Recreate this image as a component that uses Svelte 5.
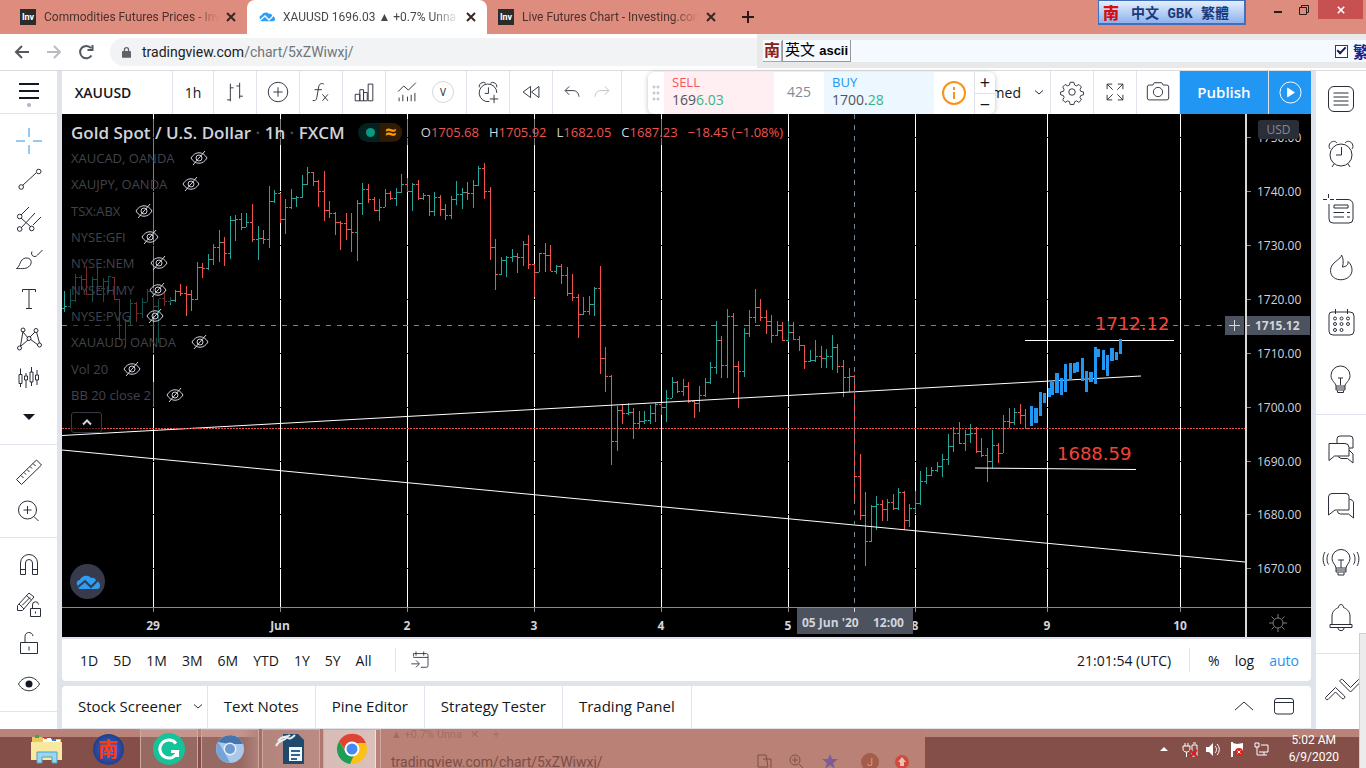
<script lang="ts">
    // [x, high, low, close], the open is the previous close
    const bars = [
        [64, 291, 312, 306], [70, 289, 308, 300], [75, 274, 302, 277], [81, 275, 290, 279], [86, 266, 295, 294], [92, 277, 302, 279],
        [97, 267, 292, 288], [103, 278, 302, 281], [108, 276, 293, 276], [114, 277, 300, 299], [119, 299, 340, 339], [125, 319, 347, 321],
        [130, 299, 325, 303], [136, 302, 322, 313], [142, 298, 318, 302], [147, 289, 302, 291], [153, 288, 316, 306], [158, 299, 343, 298],
        [164, 291, 306, 301], [170, 297, 305, 300], [175, 290, 302, 291], [180, 284, 296, 293], [186, 286, 316, 294], [191, 290, 311, 299],
        [197, 262, 300, 267], [202, 263, 278, 268], [208, 254, 270, 259], [213, 244, 265, 247], [219, 230, 262, 242], [224, 237, 266, 253],
        [230, 216, 259, 220], [235, 215, 241, 219], [241, 213, 230, 227], [246, 213, 227, 222], [252, 204, 242, 239], [258, 226, 260, 238],
        [263, 230, 244, 239], [269, 186, 248, 201], [274, 190, 203, 193], [280, 193, 223, 219], [285, 199, 234, 207], [291, 189, 209, 198],
        [296, 196, 207, 197], [302, 175, 198, 184], [307, 167, 185, 172], [313, 172, 186, 181], [318, 180, 207, 191], [324, 171, 221, 210],
        [329, 201, 218, 213], [335, 212, 235, 222], [340, 221, 250, 223], [346, 213, 240, 229], [351, 213, 252, 232], [357, 200, 261, 203],
        [362, 183, 215, 189], [368, 184, 203, 199], [374, 197, 211, 210], [379, 199, 221, 207], [385, 189, 207, 193], [390, 191, 200, 198],
        [396, 188, 206, 192], [401, 174, 193, 184], [407, 178, 192, 191], [412, 183, 211, 184], [418, 180, 200, 198], [423, 193, 200, 195],
        [429, 195, 216, 211], [434, 192, 216, 197], [440, 195, 216, 209], [445, 204, 220, 215], [451, 196, 219, 199], [456, 181, 205, 194],
        [462, 188, 209, 192], [467, 182, 200, 193], [473, 180, 208, 185], [478, 166, 186, 168], [484, 163, 199, 191], [490, 187, 260, 247],
        [495, 239, 290, 274], [501, 257, 275, 260], [506, 256, 277, 257], [512, 249, 262, 256], [517, 253, 273, 257], [523, 241, 266, 244],
        [528, 235, 269, 264], [534, 264, 297, 272], [539, 253, 272, 253], [545, 243, 272, 255], [550, 245, 271, 271], [556, 265, 274, 266],
        [561, 264, 284, 275], [567, 267, 296, 293], [572, 274, 301, 297], [578, 294, 338, 314], [583, 297, 315, 311], [589, 296, 315, 304],
        [594, 287, 316, 288], [600, 266, 374, 358], [605, 347, 392, 376], [611, 375, 465, 441], [617, 406, 451, 410], [622, 405, 424, 413],
        [628, 403, 415, 412], [633, 408, 439, 423], [639, 411, 428, 421], [644, 411, 424, 420], [650, 405, 424, 413], [655, 403, 422, 404],
        [661, 402, 415, 407], [666, 390, 422, 398], [672, 377, 398, 382], [677, 381, 393, 391], [683, 379, 396, 386], [688, 382, 403, 401],
        [694, 400, 418, 403], [699, 386, 412, 395], [705, 378, 397, 382], [710, 362, 384, 367], [716, 321, 374, 340], [721, 336, 378, 365],
        [727, 309, 378, 316], [733, 313, 393, 366], [738, 361, 408, 371], [744, 328, 377, 333], [749, 310, 337, 317], [755, 289, 323, 307],
        [760, 299, 321, 317], [766, 310, 334, 321], [771, 315, 343, 335], [777, 321, 336, 330], [782, 322, 341, 340], [788, 321, 342, 332],
        [793, 322, 340, 339], [799, 336, 351, 345], [804, 345, 369, 361], [810, 350, 362, 360], [815, 340, 362, 356], [821, 346, 368, 358],
        [826, 349, 368, 356], [832, 335, 370, 347], [837, 344, 373, 366], [843, 360, 397, 377], [849, 368, 392, 376], [854, 375, 502, 476],
        [860, 454, 520, 515], [865, 492, 566, 541], [871, 505, 542, 506], [876, 496, 530, 504], [882, 500, 521, 509], [887, 499, 521, 502],
        [893, 494, 510, 508], [898, 488, 510, 492], [904, 491, 530, 520], [909, 504, 527, 508], [915, 491, 513, 503], [920, 471, 505, 481],
        [926, 467, 484, 475], [931, 467, 476, 470], [937, 462, 472, 466], [942, 454, 477, 459], [948, 434, 465, 446], [953, 427, 452, 433],
        [959, 422, 444, 443], [965, 430, 451, 434], [970, 424, 443, 433], [976, 427, 453, 451], [981, 438, 457, 455], [987, 448, 482, 461],
        [992, 430, 468, 445], [998, 443, 463, 453], [1003, 415, 453, 421], [1009, 408, 428, 422], [1014, 408, 425, 412], [1020, 404, 424, 415],
        [1025, 409, 428, 428],
    ];

    // projected bars: [x, y, width, height]
    const ghosts = [
        [1030, 406, 3, 20], [1034, 408, 4, 15], [1039, 392, 3, 24], [1043, 393, 3, 10], [1048, 388, 3, 9], [1050, 382, 4, 13],
        [1055, 373, 4, 20], [1060, 378, 3, 17], [1064, 364, 3, 28], [1069, 363, 3, 17], [1073, 363, 3, 10], [1076, 362, 3, 10],
        [1081, 358, 3, 23], [1085, 371, 3, 21], [1089, 372, 4, 10], [1094, 347, 3, 37], [1097, 349, 3, 8], [1102, 350, 3, 20],
        [1106, 355, 3, 21], [1110, 348, 4, 13], [1115, 352, 3, 8], [1119, 339, 3, 15],
    ];

    const days: [number, string][] = [
        [153, "29"], [280, "Jun"], [407, "2"], [534, "3"], [661, "4"], [788, "5"], [915, "8"], [1047, "9"], [1180, "10"],
    ];
    const prices = [1750, 1740, 1730, 1720, 1710, 1700, 1690, 1680, 1670];
    const priceY = (p: number) => Math.round(191 + (1740 - p) * 5.39);

    const barPath = (up: boolean) =>
        bars
            .map(([x, high, low, close], i) => {
                const open = i ? bars[i - 1][3] : close + 2;
                if (close <= open !== up) return "";
                return `M${x + 0.5} ${high}V${low}M${x - 2} ${Math.min(Math.max(open, high), low) + 0.5}h2M${x + 1} ${close + 0.5}h2`;
            })
            .join("");

    const studies = [
        "XAUCAD, OANDA", "XAUJPY, OANDA", "TSX:ABX", "NYSE:GFI", "NYSE:NEM",
        "NYSE:HMY", "NYSE:PVG", "XAUAUD, OANDA", "Vol 20", "BB 20 close 2",
    ];
    const ohlc = [["O", "1705.68"], ["H", "1705.92"], ["L", "1682.05"], ["C", "1687.23"], ["", "−18.45 (−1.08%)"]];

    const ranges = ["1D", "5D", "1M", "3M", "6M", "YTD", "1Y", "5Y", "All"];
    const panels = ["Text Notes", "Pine Editor", "Strategy Tester", "Trading Panel"];

    // 28 x 28 line icons
    const icons: Record<string, string> = {
        bars: "M9 5v19M5.5 22.500h3.500M9 9.500h3.500M19 4v17M15.500 7.500h3.500M19 18.500h3.500",
        compare: "M24.500 14a10.500 10.500 0 1 1-21 0a10.500 10.500 0 0 1 21 0M14 9v10M9 14h10",
        fx: "M17 5.500c-3-1.500-5 0-5.500 3L9.500 20c-.5 3-2 4-4.500 3M7 11.500h8M15.500 16.500l6 7M21.500 16.500l-6 7",
        financials: "M4.500 16.500h5v7h-5zM9.500 11.500h4v12h-4zM13.500 14.500h4v9h-4zM18.500 5.500h5v18h-5z",
        templates: "M4.500 13.500l6-6 5 4.500 8-8M5.500 24v-4M9.500 24v-7M14.500 24v-5M18.500 24v-7M22.500 24v-9",
        alert: "M23.500 15a9.500 9.500 0 1 0-8 9.300M14.500 9v6.500h-4M4.500 9a4.500 4.500 0 0 1 7-4.500M16.500 4.500a4.500 4.500 0 0 1 7 4.500M20.500 17v9M16 21.500h9",
        replay: "M13.500 8v12l-8-6zM22.500 8v12l-8-6z",
        undo: "M11 8l-4.500 4.500 4.500 4.500M7 12.500h8c4 0 6 2.500 6.500 6.500",
        redo: "M17 8l4.500 4.500-4.500 4.500M21 12.500h-8c-4 0-6 2.500-6.500 6.500",
        gear: "M12 3.500h4l.8 3 2 .9 2.700-1.500 2.600 2.700-1.500 2.700.8 2 3 .7v3l-3 .8-.8 2 1.500 2.700-2.700 2.700-2.600-1.600-2 .9-.8 3h-4l-.7-3-2-.9-2.700 1.600-2.600-2.700 1.500-2.700-.8-2-3-.8v-3l3-.7.8-2-1.500-2.700 2.600-2.700 2.700 1.500 2-.9zM17.500 14a3.500 3.500 0 1 1-7 0a3.500 3.500 0 0 1 7 0",
        full: "M5.500 11V5.500H11M5.500 5.500l6 6M17 5.500h5.500V11M22.500 5.500l-6 6M5.500 17v5.500H11M5.500 22.500l6-6M22.500 17v5.500H17M22.500 22.500l-6-6",
        camera: "M2.500 8.500a2 2 0 0 1 2-2h4l1.500-2.500h8l1.500 2.500h4a2 2 0 0 1 2 2v12a2 2 0 0 1-2 2h-19a2 2 0 0 1-2-2zM19 14a5 5 0 1 1-10 0a5 5 0 0 1 10 0",
        line: "M7.500 19.500L21 7M8.500 21a2.300 2.300 0 1 1-4.600 0a2.300 2.300 0 0 1 4.600 0M26 5.500a2.300 2.300 0 1 1-4.600 0a2.300 2.300 0 0 1 4.600 0",
        pitchfork: "M6 9l8-8M6 22L20 7M6 12l10 9M18 19l8-8M7 10.500a2.300 2.300 0 1 1-4.600 0a2.300 2.300 0 0 1 4.600 0M7 23a2.300 2.300 0 1 1-4.600 0a2.300 2.300 0 0 1 4.600 0M19 22.500a2.300 2.300 0 1 1-4.600 0a2.300 2.300 0 0 1 4.600 0",
        brush: "M1.500 23.500c4-2 3-9.500 9-10.500c5.500-.5 7 4 4.500 7.500c-3 4-8 3-13.500 3M17 6.500c-2 4 3 7 5.500 3.500l5-5",
        text: "M7.500 7V4.500h13V7M14 5v18.500M11 23.500h6",
        pattern: "M8 7L5.500 22M8 8l5 6M15 13l5-5M21.500 8l3 11M6 22l7-6M15 15l8 6M10 6a2 2 0 1 1-4 0a2 2 0 0 1 4 0M23 6.500a2 2 0 1 1-4 0a2 2 0 0 1 4 0M16 14.500a2 2 0 1 1-4 0a2 2 0 0 1 4 0M6.500 24a2 2 0 1 1-4 0a2 2 0 0 1 4 0M26.500 21a2 2 0 1 1-4 0a2 2 0 0 1 4 0",
        forecast: "M5.500 4.500v6M5.500 20v3M4 10.500h3v9H4zM11 9v3M11 16v8M9.500 12h3v4h-3zM16.500 3v5M16.500 18v4M15 8h3v10h-3zM22 6v5M22 16v5M20.500 11h3v5h-3z",
        ruler: "M1.500 21.500L21.500 2l5 5L6.500 26.500zM6 17.500l2.500 2.500M9 14.500l2 2M12 11.500l2.500 2.500M15 8.500l2 2M18 5.500l2.500 2.500",
        zoom: "M21.500 13a9 9 0 1 1-18 0a9 9 0 0 1 18 0M12.500 9v8M8.500 13h8M19 19.500l4.500 4.500",
        magnet: "M5.500 23.500V12a8.500 8.500 0 0 1 17 0v11.500h-5V12a3.500 3.500 0 0 0-7 0v11.500zM5.500 18.500h5M17.500 18.500h5",
        pencil: "M2.500 19.500v-5L14 2l5 4L7.500 19.500zM11.500 4.500l5 4.500M4 13l5 5M7 14.500l8-8M15.500 17.500h10v8h-10zM17.500 17v-3a3 3 0 0 1 6-.5M20.500 20.500v2",
        lock: "M5.500 12.500h17v11h-17zM10 12V6.500c0-5 7-5.500 8-.5M14 16.500v4",
        eye: "M3.500 14c5-9 16-9 21 0c-5 9-16 9-21 0z",
        list: "M7 1.500h14a5.500 5.500 0 0 1 5.500 5.500v14a5.500 5.500 0 0 1-5.500 5.500H7A5.500 5.500 0 0 1 1.500 21V7A5.500 5.500 0 0 1 7 1.500M6.500 8h15M6.500 12h15M6.500 16h15M6.500 20h15",
        clock: "M25 14a11 11 0 1 1-22 0a11 11 0 0 1 22 0M14.500 6v8H9M3 8C-.5 3 6.500-2.500 10 2M18 2c3.500-4.500 10.500 1 7 6M7 23l-2 3M21 23l2 3",
        news: "M9 2.500h12a5 5 0 0 1 5 5V22a4 4 0 0 1-4 4H6a4 4 0 0 1-4-4V7M1.500-3v4M-4 2.500h4M3 2.500h4M7 8h14v3H7zM6.500 15.500H17M6.500 20H17M20 15.500h3M20 20h3",
        fire: "M14.500 1c.5 4-11 7-11 15.500c0 13 22 12 21.500-1c-.2-3-1.500-6-4-8c.3 3-1 5-5.500 5.500c1-4 1-9-1-12z",
        calendar: "M5 2h18a4 4 0 0 1 4 4v15a4 4 0 0 1-4 4H6a4 4 0 0 1-4-4V5a3 3 0 0 1 3-3M8.500-1v5M20.500-1v5M9.500 8.500a1.500 1.500 0 1 1-3 0a1.500 1.500 0 0 1 3 0M16 8.500a1.500 1.500 0 1 1-3 0a1.500 1.500 0 0 1 3 0M22.500 8.500a1.500 1.500 0 1 1-3 0a1.500 1.500 0 0 1 3 0M9.500 14a1.500 1.500 0 1 1-3 0a1.500 1.500 0 0 1 3 0M16 14a1.500 1.500 0 1 1-3 0a1.500 1.500 0 0 1 3 0M22.500 14a1.500 1.500 0 1 1-3 0a1.500 1.500 0 0 1 3 0M9.500 20a1.500 1.500 0 1 1-3 0a1.500 1.500 0 0 1 3 0M16 20a1.500 1.500 0 1 1-3 0a1.500 1.500 0 0 1 3 0",
        bulb: "M9 20c0-3-5-5-5-10.500a9.500 9.500 0 0 1 19 0C23 15 18 17 18 20zM11 12h5M13.500 12v7M9 20v4h9v-4M9 22h9M10.500 24.500v2h6v-2",
        chats: "M2 7.500h16a4 4 0 0 1 4 4V20H7.500L2 24.500zM10 7V3a3 3 0 0 1 3-3h10a3 3 0 0 1 3 3v9h-4M22 14l4 4v9l-5.500-4.500H14l-3-2",
        chat: "M5 1.500h14a3 3 0 0 1 3 3V18H8l-6.500 5V5A3.500 3.500 0 0 1 5 1.500M22.500 7.500a3.500 3.500 0 0 1 4 3.500v15l-5-4h-8a3 3 0 0 1-3-3",
        stream: "M9 20c0-3-4-5-4-9.500a9 9 0 0 1 18 0c0 4.500-4 6.500-4 9.500zM11 12h6M14 12v8M9 20v4h10v-4M9 22h10M11 24.500V27h6v-2.500M1.500 5.500c-2 3-2 8 0 11M-2 4c-2.500 4-2.500 10 0 14M26.500 5.500c2 3 2 8 0 11M30 4c2.500 4 2.500 10 0 14",
        bell: "M3 20.500h22v3H3zM5 20.500V12c0-5 4-7.500 6.500-8.500c0-4 5-4 5 0C19 4.500 23 7 23 12v8.500M11 24c0 3.500 6 3.500 6 0",
        depth: "M-1.500 20.500L8.500 10.500l9 8.500a1.800 1.800 0 0 1-2.500 2.500l-6.500-6.500-7.500 7.500a1.800 1.800 0 0 1-2.500-2zM13 4.500a1.800 1.800 0 0 1 2.500-2l8 8 8-8a1.800 1.800 0 0 1 2.500 2L23.500 15z",
        goto: "M7.500 10V6.500h15a2 2 0 0 1 2 2v12a2 2 0 0 1-2 2H16M10.500 4v5M19.500 4v5M7.500 11h17M5 18.500h9M10.500 14.500l4 4-4 4",
    };

    const tools = ["cross", "line", "pitchfork", "brush", "text", "pattern", "forecast", "more"];
    const tools2 = ["ruler", "zoom"];
    const tools3 = ["magnet", "pencil", "lock", "eye"];
    const widgets = ["list", "clock", "news", "fire", "calendar", "bulb"];
    const widgets2 = ["chats", "chat", "stream", "bell"];
</script>

{#snippet icon(name: string)}
    <svg class="icon" viewBox="0 0 28 28" aria-hidden="true">
        {#if name === "cross"}
            <path class="blue" d="M14 1v9M14 18v9M1 14h9M18 14h9" />
        {:else if name === "more"}
            <path class="solid" d="M8 11h12l-6 6z" />
        {:else}
            <path d={icons[name]} />
            {#if name === "eye"}<circle class="solid" cx="14" cy="14" r="3.500" />{/if}
        {/if}
    </svg>
{/snippet}

{#snippet tool(name: string)}
    <button class="tool" aria-label={name}>{@render icon(name)}</button>
{/snippet}

{#snippet cloud()}
    <svg class="cloud" viewBox="0 0 24 14" aria-hidden="true">
        <path fill="#2e9df4" d="M1 9.500C0 7 2 5 4 5c1-4 8-6 11-2c3-1 5 1 5 3c3 0 4 3 4 5c0 2-1 3-3 3H3z" />
        <path class="zig" d="M2 12l7-6 6 6 6-6" />
    </svg>
{/snippet}

{#snippet closeMark()}
    <button class="close" aria-label="close tab">
        <svg viewBox="0 0 8 8"><path d="M0 0l8 8M8 0L0 8" /></svg>
    </button>
{/snippet}

<div class="page">
    <header class="tabs">
        <div class="tab">
            <span class="inv">Inv</span>
            <span class="tab-title">Commodities Futures Prices - Inv</span>
            {@render closeMark()}
        </div>
        <div class="tab active">
            {@render cloud()}
            <span class="tab-title">XAUUSD 1696.03 ▲ +0.7% Unna</span>
            {@render closeMark()}
        </div>
        <div class="tab">
            <span class="inv">Inv</span>
            <span class="tab-title">Live Futures Chart - Investing.com</span>
            {@render closeMark()}
        </div>
        <button class="new-tab" aria-label="new tab"><svg viewBox="0 0 12 12"><path d="M6 0v12M0 6h12" /></svg></button>
        <div class="ime-badge"><b>南</b><span>中文 GBK 繁體</span></div>
        <div class="window-controls">
            <button aria-label="minimise"><svg viewBox="0 0 10 10"><path stroke-width="2" d="M1 7h8" /></svg></button>
            <button aria-label="restore"><svg viewBox="0 0 10 10"><path d="M.5 2.500h7v7h-7zM2.500 2.500v-2h7v7h-2" /></svg></button>
            <button class="quit" aria-label="close window"><svg viewBox="0 0 10 10"><path d="M1 1l8 8M9 1L1 9" /></svg></button>
        </div>
    </header>

    <div class="address">
        <button aria-label="back"><svg viewBox="0 0 16 16"><path d="M15 8H2M8 2L2 8l6 6" /></svg></button>
        <button class="off" aria-label="forward"><svg viewBox="0 0 16 16"><path d="M1 8h13M8 2l6 6-6 6" /></svg></button>
        <button aria-label="reload"><svg viewBox="0 0 16 16"><path d="M13.500 11.500A6.200 6.200 0 1 1 13 4M14.500 1v5h-5" /></svg></button>
        <div class="url">
            <svg viewBox="0 0 10 12"><path fill="#5f6368" d="M1 4.500h1V3a3 3 0 0 1 6 0v1.500h1a1 1 0 0 1 1 1V11a1 1 0 0 1-1 1H1a1 1 0 0 1-1-1V5.500a1 1 0 0 1 1-1M3.500 4.500h3V3a1.500 1.500 0 0 0-3 0z" /></svg>
            <span>tradingview.com<i>/chart/5xZWiwxj/</i></span>
        </div>
        <div class="ime-bar">
            <b class="nan">南</b>
            <span class="mode">英文 <b>ascii</b></span>
            <input type="checkbox" checked aria-label="繁" />
            <b class="fan">繁</b>
        </div>
    </div>

    <main>
        <nav class="left">
            <button class="menu" aria-label="menu">
                <svg viewBox="0 0 20 26"><path d="M0 5h20M0 12h20M0 19h20" /><circle cx="10" cy="26" r="2" /></svg>
            </button>
            <div class="group drawing">
                {#each tools as name}{@render tool(name)}{/each}
            </div>
            <div class="group measuring">
                {#each tools2 as name}{@render tool(name)}{/each}
            </div>
            <div class="group locking">
                {#each tools3 as name}{@render tool(name)}{/each}
            </div>
        </nav>

        <section class="center">
            <div class="topbar">
                <button class="symbol">XAUUSD</button>
                <button class="interval">1h</button>
                <button class="cell" aria-label="bars">{@render icon("bars")}</button>
                <button class="cell" aria-label="compare">{@render icon("compare")}</button>
                <button class="cell" aria-label="indicators">{@render icon("fx")}</button>
                <button class="cell" aria-label="financials">{@render icon("financials")}</button>
                <div class="cell templates">{@render icon("templates")}<button class="v">V</button></div>
                <button class="cell" aria-label="alert">{@render icon("alert")}</button>
                <button class="cell" aria-label="replay">{@render icon("replay")}</button>
                <div class="cell history">{@render icon("undo")}<span class="faded">{@render icon("redo")}</span></div>
                <button class="layout">Unnamed <svg viewBox="0 0 8 5"><path d="M0 .5l4 3.500 4-3.500" /></svg></button>
                <button class="cell" aria-label="settings">{@render icon("gear")}</button>
                <button class="cell" aria-label="fullscreen">{@render icon("full")}</button>
                <button class="cell" aria-label="snapshot">{@render icon("camera")}</button>
                <button class="publish">Publish</button>
                <button class="play" aria-label="play">
                    <svg viewBox="0 0 24 24"><circle cx="12" cy="12" r="11" /><path d="M9 7.500l7 4.500-7 4.500z" /></svg>
                </button>
                <div class="quotes">
                    <span class="grip"></span>
                    <button class="sell"><b>SELL</b><span>169<em>6.03</em></span></button>
                    <span class="spread">425</span>
                    <button class="buy"><b>BUY</b><span>1700.<em>28</em></span></button>
                    <button class="info" aria-label="info">
                        <svg viewBox="0 0 24 24"><circle cx="12" cy="12" r="11" /><path d="M12 6v3M12 11v7" /></svg>
                    </button>
                    <div class="steps"><button>+</button><button>−</button></div>
                </div>
            </div>

            <div class="chart">
                <svg class="plot" viewBox="62 114 1249 523" preserveAspectRatio="xMinYMin slice">
                    {#each days as [x]}
                        <path class="day" d="M{x + 0.5} 114V607" />
                        <path class="tick" d="M{x + 0.5} 607v5" />
                    {/each}
                    {#each prices as p}
                        <path class="level" d="M62 {priceY(p) + 0.5}H1245" />
                    {/each}
                    <path class="up" d={barPath(true)} />
                    <path class="down" d={barPath(false)} />
                    <path class="trend" d="M62 435.500L1141 376M62 450L1245 562M975 468L1136 469.500M1025 340.500H1174" />
                    {#each ghosts as [x, y, w, h]}
                        <rect {x} {y} width={w} height={h} fill="#2196f3" />
                    {/each}
                    <path class="last" d="M62 428.500H1245" />
                    <path class="cross" d="M62 325.500H1245M854.500 114V607" />
                    <text class="note" x="1095" y="330">1712.12</text>
                    <text class="note" x="1057" y="460">1688.59</text>

                    <path class="tick" d="M62 607.500H1311" />
                    <path class="axis" d="M1246 114V637" />
                    {#each days as [x, label]}
                        <text class="label" {x} y="630" text-anchor="middle">{label}</text>
                    {/each}
                    {#each prices as p}
                        <path class="tick" d="M1247 {priceY(p) + 0.5}h4" />
                        <text class="price" x="1257" y={priceY(p) + 5}>{p}.00</text>
                    {/each}

                    <rect x="1225" y="316" width="19" height="19" fill="#4c525e" />
                    <path class="axis thin" d="M1229 325.500h11M1234.500 320v11" />
                    <rect x="1247" y="316" width="63" height="19" fill="#4c525e" />
                    <path class="axis thin" d="M1247 325.500h3" />
                    <text class="label" x="1255" y="330">1715.12</text>
                    <rect x="797" y="608" width="116" height="26" fill="#4c525e" />
                    <path class="axis thin" d="M854.500 608v4" />
                    <text class="label" x="802" y="627">05 Jun '20</text>
                    <text class="label" x="873" y="627">12:00</text>
                    <circle class="sun" cx="1278" cy="623" r="5" />
                    <path class="sun" d="M1278 618v-4M1278 628v4M1273 623h-4M1283 623h4M1274.500 619.500l-3-3M1281.500 619.500l3-3M1274.500 626.500l-3 3M1281.500 626.500l3 3" />
                </svg>

                <div class="legend">
                    <div class="title">
                        <h1>Gold Spot / U.S. Dollar <i>·</i> 1h <i>·</i> FXCM</h1>
                        <span class="status"><span class="dot"></span><span class="delay">≈</span></span>
                        <span class="ohlc">
                            {#each ohlc as [key, value]}<span>{key}<b>{value}</b></span>{/each}
                        </span>
                    </div>
                    <ul>
                        {#each studies as study}
                            <li>
                                <span>{study}</span>
                                <svg viewBox="0 0 18 14"><path d="M1 7c4-7 12-7 16 0c-4 7-12 7-16 0zM12 7a3 3 0 1 1-6 0a3 3 0 0 1 6 0M3 14L15 0" /></svg>
                            </li>
                        {/each}
                    </ul>
                    <button class="collapse" aria-label="collapse"><svg viewBox="0 0 8 5"><path d="M0 4.500l4-4 4 4" /></svg></button>
                </div>
                <a class="brand" href="#top" aria-label="TradingView">{@render cloud()}</a>
                <button class="currency">USD</button>
            </div>

            <div class="ranges">
                {#each ranges as range}<button>{range}</button>{/each}
                <button class="goto" aria-label="go to date">{@render icon("goto")}</button>
                <span class="time">21:01:54 (UTC)</span>
                <button class="percent">%</button>
                <button>log</button>
                <button class="auto">auto</button>
            </div>

            <div class="panels">
                <button class="screener">Stock Screener <svg viewBox="0 0 8 5"><path d="M0 .5l4 3.500 4-3.500" /></svg></button>
                {#each panels as panel}<button>{panel}</button>{/each}
                <div class="panel-tools">
                    <svg viewBox="0 0 20 20"><path d="M1 14l9-8 9 8" /></svg>
                    <svg viewBox="0 0 20 20"><path d="M3 2.500h14a2.500 2.500 0 0 1 2.500 2.500v10.500a2.500 2.500 0 0 1-2.500 2.500H3a2.500 2.500 0 0 1-2.500-2.500V5A2.500 2.500 0 0 1 3 2.500M1 6.500h18" /></svg>
                </div>
            </div>
        </section>

        <nav class="right">
            <div class="group upper">
                {#each widgets as name}{@render tool(name)}{/each}
            </div>
            <div class="group lower">
                {#each widgets2 as name}{@render tool(name)}{/each}
            </div>
            <div class="group last-group">{@render tool("depth")}</div>
        </nav>
    </main>

    <footer>
        <div class="apps">
            <button class="app" aria-label="files">
                <svg viewBox="0 0 32 32">
                    <path fill="#e8c75c" d="M1 4h10l2 2h17v21H1z" />
                    <path fill="#fff" d="M12 5h8v4h-8zM20 7h9v4h-9z" />
                    <path fill="#39a845" d="M4 2h4v3H4z" /><path fill="#d9402c" d="M13 4h3v2h-3z" /><path fill="#2c7fd9" d="M21 6h4v2h-4z" />
                    <path fill="#f9e9a0" d="M0 9h31v18H0z" />
                    <path fill="#9ad6ee" stroke="#4f9fc4" d="M6 19h20v11h-5v-6H11v6H6z" />
                </svg>
            </button>
            <button class="app nanji" aria-label="nanji"><b>南</b></button>
            <button class="app open" aria-label="grammarly">
                <svg viewBox="0 0 32 32"><circle cx="16" cy="16" r="16" fill="#15c39a" /><path fill="none" stroke="#fff" stroke-width="3" d="M23 10.500a9 9 0 1 0 1.500 8h-6.500M24.500 17v7" /></svg>
            </button>
            <button class="app open" aria-label="chromium">
                <svg viewBox="0 0 32 32"><circle cx="16" cy="16" r="14" fill="#a9c8ea" /><path fill="#4674ac" d="M4 9a14 14 0 0 1 25 2H16z" /><path fill="#76a3d6" d="M4 9l7 11 5 10A14 14 0 0 1 4 9" /><circle cx="16" cy="16" r="6.500" fill="#e4f0fb" /><circle cx="16" cy="16" r="5" fill="#6d9ad0" /></svg>
            </button>
            <button class="app open" aria-label="writer">
                <svg viewBox="0 0 32 32"><path fill="#1f4a6e" d="M8 1h15l6 6v24H8z" /><path fill="#f4f8fb" d="M14 14h13v14H14z" /><path stroke="#2b6796" stroke-width="2" d="M16 18h9M16 22h9M16 26h6" /><path fill="none" stroke="#e5eef5" stroke-width="2" d="M1 13c3-7 8-4 11-9c2 3 5 1 8-2M3 8c4-6 8-3 12-6" /></svg>
            </button>
            <button class="app open current" aria-label="chrome">
                <svg viewBox="0 0 32 32"><circle cx="16" cy="16" r="15" fill="#fbc116" /><path fill="#dd4434" d="M3 8.500a15 15 0 0 1 27 1.500H16l-6 8z" /><path fill="#1c9e58" d="M3 8.500L10 19l8 3-4 9A15 15 0 0 1 3 8.500" /><circle cx="16" cy="16" r="7.500" fill="#fff" /><circle cx="16" cy="16" r="5.500" fill="#4688f4" /></svg>
            </button>
            <div class="glass" aria-hidden="true">
                <span class="glass-title">▲ +0.7% Unna &nbsp; ✕ &nbsp; &nbsp; +</span>
                <div class="glass-row">
                    <span>tradingview.com/chart/5xZWiwxj/</span>
                    <svg viewBox="0 0 160 16">
                        <path d="M7 1h8l2 12H7zM12 5h8v10h-6" />
                        <path d="M49 6a5 5 0 1 1-10 0a5 5 0 0 1 10 0M48 10l5 5M44 3v6M41 6h6" />
                        <path fill="#7a5c99" stroke="none" d="M79 0l2 5h6l-5 4 2 6-5-4-5 4 2-6-5-4h6z" />
                        <circle cx="119" cy="8" r="9" fill="#a35d49" stroke="none" />
                        <text x="119" y="12" text-anchor="middle">J</text>
                        <circle cx="151" cy="8" r="7" fill="#cf4a3c" stroke="none" /><path fill="#e8c0b8" stroke="none" d="M151 3l4 5h-2v4h-4V8h-2z" />
                    </svg>
                </div>
            </div>
        </div>
        <div class="tray">
            <svg viewBox="0 0 112 18">
                <path fill="#fff" d="M3 11l4-4 4 4z" />
                <path class="tray-line" d="M28 3v3M31 3v3M26 6h7v3c0 4-7 4-7 0zM29.500 12v5M35 5h5v11h-5zM36 3h3" />
                <path stroke="#e01b1b" stroke-width="2" d="M33 10l7 7M40 10l-7 7" />
                <path fill="#fff" d="M49 7h3l4-4v13l-4-4h-3z" /><path class="tray-line" d="M58 6c2 2 2 5 0 7M60 4c3 3 3 8 0 11" />
                <path fill="#fff" d="M74 2h2v15h-2zM76 3l4 1 6-1v8h-10z" />
                <circle cx="82" cy="12" r="4" fill="#d9251c" /><path class="tray-line" d="M80.500 10.500l3 3M83.500 10.500l-3 3" />
                <path class="tray-line" d="M98 3h4v4h-4zM100 7v8h4M104 5h7v7h-9M104 15h6M107 12v3" />
            </svg>
            <div class="date"><span>5:02 AM</span><span>6/9/2020</span></div>
        </div>
    </footer>
    <div class="edge"></div>
</div>

<style>
    :global(body) {
        background: #e0e3eb;
    }

    .page {
        position: relative;
        display: flex;
        flex-direction: column;
        min-height: 100vh;
        overflow: hidden;
        font-family: "Open Sans", "Noto Sans", "Noto Sans CJK SC", sans-serif;
        font-size: 13px;
        color: #131722;
    }

    button {
        display: flex;
        align-items: center;
        justify-content: center;
        padding: 0;
        border: 0;
        background: none;
        font: inherit;
        color: inherit;
        white-space: nowrap;
        cursor: pointer;
    }

    svg {
        display: block;
        flex: none;
        overflow: visible;
    }

    /* browser tabs */
    .tabs {
        position: relative;
        display: flex;
        height: 34px;
        background: #de8c7d;
        font-family: Roboto, sans-serif;
        font-size: 12px;
    }
    .tab {
        display: flex;
        align-items: center;
        gap: 8px;
        box-sizing: border-box;
        width: 240px;
        padding: 0 12px 0 20px;
        color: #4b302b;
    }
    .tab:first-child {
        width: 247px;
    }
    .tab.active {
        padding-left: 12px;
        background: #fff;
        border-radius: 8px 8px 0 0;
        color: #45494d;
    }
    .tab:nth-child(3) {
        padding: 0 12px 0 11px;
    }
    .tab-title {
        flex: 1;
        overflow: hidden;
        white-space: nowrap;
        mask-image: linear-gradient(to right, #000 85%, transparent);
    }
    .inv {
        width: 16px;
        line-height: 16px;
        background: #2b2b2b;
        color: #fff;
        font-size: 9px;
        font-weight: 700;
        text-align: center;
    }
    .cloud {
        width: 16px;
    }
    .zig {
        fill: none;
        stroke: #fff;
        stroke-width: 2;
    }
    .close svg {
        width: 8px;
        fill: none;
        stroke: #3a2724;
        stroke-width: 2;
    }
    .new-tab {
        width: 42px;
    }
    .new-tab svg {
        width: 12px;
        stroke: #2a1b18;
        stroke-width: 2;
    }
    .ime-badge {
        position: absolute;
        top: 0;
        right: 120px;
        display: flex;
        align-items: center;
        gap: 12px;
        box-sizing: border-box;
        width: 148px;
        height: 25px;
        padding: 0 4px;
        border: 1px solid #3f6fc0;
        border-width: 1px 2px 2px 1px;
        background: linear-gradient(#e4effd, #8eb2ec);
        color: #1a3a7c;
        font: 700 16px "Liberation Mono", "Noto Sans CJK SC", monospace;
        white-space: nowrap;
    }
    .ime-badge span {
        font-size: 14px;
    }
    .ime-badge b {
        color: #d41111;
    }
    .window-controls {
        display: flex;
        margin-left: auto;
        padding-right: 3px;
        height: 19px;
    }
    .window-controls button {
        width: 26px;
    }
    .window-controls svg {
        width: 10px;
        fill: none;
        stroke: #2a1b18;
    }
    .window-controls .quit {
        width: 45px;
        margin-left: 1px;
        background: #c75050;
    }
    .window-controls .quit svg {
        width: 8px;
        stroke: #fff;
        stroke-width: 2;
    }

    /* address row */
    .address {
        position: relative;
        display: flex;
        align-items: center;
        gap: 16px;
        box-sizing: border-box;
        height: 37px;
        padding-left: 14px;
        background: #fff;
        border-bottom: 1px solid #dadce0;
    }
    .address button svg {
        width: 16px;
        fill: none;
        stroke: #54585c;
        stroke-width: 2;
    }
    .address .off svg {
        stroke: #b9bcc0;
    }
    .url {
        display: flex;
        flex: 1;
        align-items: center;
        gap: 11px;
        height: 28px;
        padding-left: 12px;
        border-radius: 14px 0 0 14px;
        background: #f1f3f4;
        color: #202124;
        font-family: Roboto, sans-serif;
        font-size: 14px;
    }
    .url svg {
        width: 9px;
    }
    .url i {
        color: #70757a;
        font-style: normal;
    }
    .ime-bar {
        position: absolute;
        top: 0;
        right: 0;
        display: flex;
        align-items: center;
        box-sizing: border-box;
        width: 609px;
        height: 34px;
        border: 6px solid #e9e9e9;
        border-right: 0;
        background: #f4faff;
        font: 15px "Liberation Sans", "Noto Sans CJK SC", sans-serif;
        color: #000;
        overflow: hidden;
    }
    .nan {
        width: 18px;
        border: 1px solid #aaa;
        border-width: 0 1px 1px 0;
        font-size: 16px;
        line-height: 20px;
        text-align: center;
        color: #8c2020;
    }
    .mode {
        padding: 0 2px;
        border: 1px solid #999;
        border-width: 0 1px 1px 1px;
        line-height: 20px;
    }
    .mode b {
        font-size: 13px;
    }
    .ime-bar input {
        display: flex;
        align-items: center;
        justify-content: center;
        width: 13px;
        height: 13px;
        margin: 0 5px 0 auto;
        border: 1px solid #2a2ea8;
        background: #fff;
        appearance: none;
    }
    .ime-bar input::before {
        width: 7px;
        height: 3px;
        margin-bottom: 3px;
        border: solid #16165c;
        border-width: 0 0 2px 2px;
        transform: rotate(-45deg);
        content: "";
    }
    .fan {
        width: 13px;
        font-size: 16px;
        color: #201c8c;
    }

    main {
        display: flex;
        flex: 1;
        gap: 5px;
        min-height: 0;
        background: #e0e3eb;
    }

    /* side toolbars */
    .left,
    .right {
        display: flex;
        flex: none;
        flex-direction: column;
        width: 57px;
        background: #fff;
    }
    .right {
        width: 50px;
    }
    .menu {
        height: 43px;
        border-bottom: 1px solid #e0e3eb;
    }
    .menu svg {
        width: 20px;
        fill: #b2b5be;
        stroke: #131722;
        stroke-width: 2;
    }
    .menu circle {
        stroke: none;
    }
    .group {
        display: flex;
        flex-direction: column;
        box-sizing: border-box;
        border-bottom: 1px solid #e0e3eb;
        padding: 7px 0;
    }
    .tool {
        flex: 1;
    }
    .drawing {
        height: 331px;
    }
    .measuring {
        height: 93px;
    }
    .locking {
        height: 174px;
    }
    .upper {
        height: 344px;
        padding: 0 0 6px;
    }
    .lower {
        height: 239px;
    }
    .last-group {
        height: 73px;
        border: 0;
    }
    .icon {
        width: 28px;
        height: 28px;
        fill: none;
        stroke: #2a2e39;
    }
    .icon .blue {
        stroke: #2196f3;
    }
    .icon .solid {
        fill: #131722;
        stroke: none;
    }

    .center {
        display: flex;
        flex: 1;
        flex-direction: column;
        min-width: 0;
    }

    /* chart header */
    .topbar {
        position: relative;
        display: flex;
        height: 43px;
        background: #fff;
        font-size: 14px;
    }
    .topbar > button,
    .topbar > .cell {
        box-sizing: border-box;
        padding-bottom: 1px;
        border-right: 1px solid #e0e3eb;
    }
    .topbar .icon {
        width: 26px;
        height: 26px;
    }
    .topbar .symbol {
        width: 111px;
        padding-right: 28px;
        font-weight: 600;
    }
    .interval {
        width: 41px;
    }
    .cell {
        display: flex;
        align-items: center;
        justify-content: center;
        width: 43px;
    }
    .templates {
        gap: 12px;
        width: 81px;
        padding-right: 4px;
    }
    .v {
        width: 22px;
        height: 22px;
        border: 1px solid #d5d8e0;
        border-radius: 50%;
        font-size: 10px;
    }
    .history {
        gap: 4px;
        width: 69px;
        margin-right: auto;
    }
    .faded {
        opacity: 0.3;
    }
    .topbar .layout {
        gap: 14px;
        padding: 0 7px 1px 8px;
    }
    .layout svg,
    .screener svg {
        width: 8px;
        fill: none;
        stroke: #2a2e39;
    }
    .topbar .publish {
        width: 89px;
        background: #2196f3;
        color: #fff;
        font-size: 15px;
        font-weight: 600;
    }
    .topbar .play {
        width: 42px;
        border: 0;
        background: #2196f3;
    }
    .play svg {
        width: 23px;
        fill: #fff;
        stroke: #fff;
    }
    .play circle {
        fill: none;
    }
    .quotes {
        position: absolute;
        top: 1px;
        right: 316px;
        z-index: 2;
        display: flex;
        width: 347px;
        height: 42px;
        border-radius: 6px;
        background: #fff;
        box-shadow: 0 1px 5px rgba(0, 0, 0, 0.25);
        overflow: hidden;
    }
    .grip {
        width: 8px;
        height: 18px;
        margin: 12px 4px;
        background: radial-gradient(circle, #c9ccd4 1px, transparent 2px) 0 0 / 4px 6px;
    }
    .sell,
    .buy {
        flex-direction: column;
        align-items: flex-start;
        box-sizing: border-box;
        width: 110px;
        padding: 0 0 4px 8px;
        background: #ffeff2;
        color: #50535e;
        font-size: 14px;
        line-height: 17px;
    }
    .sell b {
        color: #f7525f;
        font-size: 13px;
        font-weight: 400;
    }
    .buy {
        background: #edf7ff;
    }
    .buy b {
        color: #2196f3;
        font-size: 13px;
        font-weight: 400;
    }
    .quotes em {
        color: #34b58b;
        font-style: normal;
    }
    .spread {
        width: 50px;
        line-height: 40px;
        color: #868993;
        text-align: center;
    }
    .info {
        width: 40px;
    }
    .info svg {
        width: 24px;
        fill: none;
        stroke: #f7931a;
        stroke-width: 2;
    }
    .steps {
        display: flex;
        flex: 1;
        flex-direction: column;
        border-left: 1px solid #e0e3eb;
    }
    .steps button {
        flex: 1;
        font-size: 18px;
        line-height: 20px;
    }
    .steps button + button {
        border-top: 1px solid #e0e3eb;
    }

    /* chart */
    .chart {
        position: relative;
        flex: 1;
        min-height: 0;
        background: #000;
        color: #d1d4dc;
    }
    .plot {
        width: 100%;
        height: 100%;
        overflow: hidden;
    }
    .plot path {
        fill: none;
    }
    .day {
        stroke: #fff;
    }
    .tick {
        stroke: #8a8a8a;
    }
    .level {
        stroke: #000;
    }
    .up {
        stroke: #26a69a;
    }
    .down {
        stroke: #ef5350;
    }
    .trend {
        stroke: #fff;
    }
    .last {
        stroke: #ef5350;
        stroke-dasharray: 2 1;
    }
    .plot .cross {
        stroke: #758696;
        stroke-dasharray: 5 6;
    }
    .axis {
        stroke: #d8d8d8;
        stroke-width: 2;
    }
    .axis.thin {
        stroke-width: 1;
    }
    .note {
        fill: #f44336;
        font: 18px "DejaVu Sans", sans-serif;
    }
    .label,
    .price {
        fill: #d1d4dc;
        font-size: 12px;
        font-weight: 700;
    }
    .price {
        font-weight: 500;
    }
    .sun {
        fill: none;
        stroke: #787b86;
    }

    .legend {
        position: absolute;
        top: 5px;
        left: 5px;
    }
    .title {
        display: flex;
        align-items: center;
        height: 26px;
        padding-left: 4px;
        background: rgba(0, 0, 0, 0.5);
    }
    h1 {
        margin: 0;
        font-size: 17px;
        font-weight: 600;
        white-space: nowrap;
    }
    h1 i {
        color: #50535e;
        font-style: normal;
    }
    .status {
        display: flex;
        align-items: center;
        margin: 0 19px 0 13px;
        border-radius: 10px;
        overflow: hidden;
        height: 19px;
        background: #03211f;
    }
    .dot {
        width: 9px;
        height: 9px;
        margin: 0 5px 0 8px;
        border-radius: 50%;
        background: #089981;
    }
    .delay {
        width: 22px;
        background: #2f1c02;
        color: #ff9800;
        font-size: 20px;
        font-weight: 700;
        line-height: 18px;
        text-align: center;
    }
    .ohlc {
        display: flex;
        gap: 10px;
        white-space: nowrap;
    }
    .ohlc b {
        color: #ef5350;
        font-weight: 400;
    }
    ul {
        display: flex;
        flex-direction: column;
        align-items: flex-start;
        height: 263px;
        margin: 0;
        padding: 0;
        list-style: none;
    }
    li {
        display: flex;
        flex: 1;
        align-items: center;
        gap: 15px;
        padding: 0 4px;
        background: rgba(0, 0, 0, 0.5);
        color: #41434c;
    }
    li svg {
        width: 18px;
        fill: none;
        stroke: #d1d4dc;
    }
    .collapse {
        width: 31px;
        height: 21px;
        margin: 4px;
        border: 1px solid #363a45;
        border-radius: 3px;
        background: rgba(0, 0, 0, 0.6);
    }
    .collapse svg {
        width: 8px;
        fill: none;
        stroke: #d1d4dc;
        stroke-width: 2;
    }
    .brand {
        position: absolute;
        bottom: 38px;
        left: 8px;
        display: flex;
        align-items: center;
        justify-content: center;
        width: 35px;
        height: 35px;
        border-radius: 50%;
        background: #363a4a;
    }
    .brand .cloud {
        width: 24px;
    }
    .brand .zig {
        stroke: #363a4a;
    }
    .currency {
        position: absolute;
        top: 6px;
        right: 12px;
        width: 41px;
        height: 19px;
        border-radius: 3px;
        background: #2a2e39;
        color: #868993;
        font-size: 12px;
    }

    /* below the chart */
    .ranges,
    .panels {
        display: flex;
        flex: none;
        align-items: center;
        box-sizing: border-box;
        height: 43px;
        background: #fff;
    }
    .ranges {
        gap: 15px;
        height: 42px;
        margin: 2px 0 5px;
        padding: 0 12px 0 18px;
        border-radius: 0 0 4px 4px;
        font-size: 14px;
    }
    .goto {
        margin-left: 9px;
        padding-left: 11px;
        border-left: 1px solid #e0e3eb;
    }
    .ranges .icon {
        width: 24px;
        height: 24px;
    }
    .time {
        margin-left: auto;
    }
    .percent {
        height: 24px;
        margin-left: 3px;
        padding-left: 18px;
        border-left: 1px solid #e0e3eb;
    }
    .auto {
        color: #2196f3;
    }
    .panels {
        border-bottom: 1px solid #e0e3eb;
        border-radius: 4px 4px 0 0;
    }
    .panels button {
        align-self: stretch;
        padding: 0 16px 2px;
        border-right: 1px solid #e0e3eb;
        font-size: 15px;
    }
    .panels .screener {
        gap: 12px;
        padding-right: 5px;
    }
    .panel-tools {
        display: flex;
        gap: 20px;
        margin: 0 17px 3px auto;
    }
    .panel-tools svg {
        width: 20px;
        fill: none;
        stroke: #2a2e39;
    }

    /* task bar */
    footer {
        display: flex;
        flex: none;
        height: 40px;
        background: linear-gradient(#b98379 8px, #844f48 8px);
        color: #fff;
        overflow: hidden;
    }
    .apps {
        display: flex;
        gap: 3px;
        box-sizing: border-box;
        width: 925px;
        padding-left: 18px;
        background: linear-gradient(to right, transparent 240px, #a56f66 260px, #ba8177 390px);
    }
    .app {
        flex: none;
        box-sizing: border-box;
        width: 58px;
    }
    .app svg {
        width: 32px;
        height: 32px;
    }
    .nanji b {
        width: 31px;
        line-height: 31px;
        border-radius: 50%;
        background: radial-gradient(#3d6fd0, #16296f);
        color: #ff3a12;
        font-size: 20px;
    }
    .open {
        border: 1px solid #cda8a1;
        background: rgba(255, 255, 255, 0.15);
    }
    .current {
        background: rgba(255, 255, 255, 0.5);
        box-shadow: inset -4px 0 #ba8177, inset -5px 0 #f0e0dd;
    }
    .glass {
        flex: 1;
        display: flex;
        flex-direction: column;
        gap: 10px;
        padding-left: 7px;
        color: #7d4e46;
        font-family: Roboto, sans-serif;
        font-size: 14px;
        white-space: nowrap;
    }
    .glass-title {
        font-size: 11px;
        line-height: 12px;
        opacity: 0.4;
    }
    .glass-row {
        display: flex;
        justify-content: space-between;
        padding-right: 14px;
        line-height: 22px;
    }
    .glass-row svg {
        width: 160px;
        fill: none;
        stroke: #7d4e46;
    }
    .glass-row text {
        fill: #cf9d90;
        stroke: none;
        font-size: 11px;
    }
    .tray {
        display: flex;
        align-items: center;
        gap: 20px;
        margin-left: auto;
        padding-right: 27px;
        font-family: Roboto, sans-serif;
        font-size: 12px;
    }
    .tray svg {
        width: 112px;
    }
    .tray-line {
        fill: none;
        stroke: #fff;
    }
    .date {
        display: flex;
        flex-direction: column;
        align-items: center;
        line-height: 17px;
    }
    .edge {
        position: absolute;
        right: 0;
        bottom: 0;
        width: 6px;
        height: 135px;
        border: 1px solid #cfcfcf;
        border-width: 1px 0 0 1px;
        background: #ececec;
    }
</style>
